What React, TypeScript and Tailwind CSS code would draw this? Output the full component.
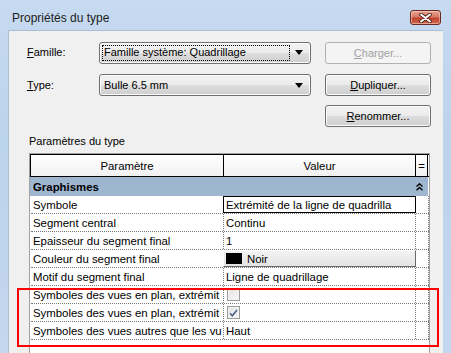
import React from "react";

const btn =
  "h-[22px] rounded-[3px] border border-[#707070] bg-[linear-gradient(#f2f2f2_0%,#ebebeb_50%,#dddddd_51%,#cfcfcf_100%)] shadow-[inset_0_0_0_1px_#fbfbfb] flex items-center justify-center text-[11px] text-black";

const Arrow = () => (
  <svg width="8" height="5" viewBox="0 0 8 5" className="shrink-0">
    <path d="M0 0h8L4 5z" fill="#000" />
  </svg>
);

const Check = ({ checked }: { checked?: boolean }) => (
  <div className="ml-[3px] w-[13px] h-[13px] border border-[#9a9a9a] bg-[linear-gradient(135deg,#e4e4e4,#f7f7f7)] shadow-[inset_0_0_0_1px_#f4f4f4] flex items-center justify-center">
    {checked && (
      <svg width="9" height="8" viewBox="0 0 9 8">
        <path d="M1 4.2l2.3 2.5L8 1" fill="none" stroke="#4a5f8c" strokeWidth="1.6" />
      </svg>
    )}
  </div>
);

type Row = { name: string; value?: React.ReactNode; kind?: "edit" | "color" | "check" | "checked" };

// texts as they show in the grid columns
const rows: Row[] = [
  { name: "Symbole", value: "Extrémité de la ligne de quadrilla", kind: "edit" },
  { name: "Segment central", value: "Continu" },
  { name: "Epaisseur du segment final", value: "1" },
  { name: "Couleur du segment final", value: "Noir", kind: "color" },
  { name: "Motif du segment final", value: "Ligne de quadrillage" },
  { name: "Symboles des vues en plan, extrémit", kind: "check" },
  { name: "Symboles des vues en plan, extrémit", kind: "checked" },
  { name: "Symboles des vues autres que les vu", value: "Haut" },
];

function ValueCell({ row }: { row: Row }) {
  if (row.kind === "edit") {
    return (
      <div className="w-[193px] -ml-px h-[18px] border border-black bg-white pl-[2px] flex items-center overflow-hidden whitespace-nowrap">
        {row.value}
      </div>
    );
  }
  if (row.kind === "color") {
    return (
      <div className="w-[193px] -ml-px h-[18px] border border-t-white border-l-white border-r-[#696969] border-b-[#696969] bg-[linear-gradient(#f3f3f3,#e3e3e3)] flex items-center pl-[2px] gap-[5px]">
        <div className="w-[16px] h-[11px] bg-black" />
        <span>{row.value}</span>
      </div>
    );
  }
  if (row.kind === "check" || row.kind === "checked") {
    return (
      <div className="h-full flex items-center border-r border-dotted border-[#7a7a7a]">
        <Check checked={row.kind === "checked"} />
      </div>
    );
  }
  return (
    <div className="h-full pl-[2px] flex items-center overflow-hidden whitespace-nowrap border-r border-dotted border-[#7a7a7a]">
      {row.value}
    </div>
  );
}

export default function App() {
  return (
    <div className="relative w-[451px] h-[353px] overflow-hidden flex flex-col bg-[linear-gradient(#c6daf0,#bcd3ec_40%,#c3d7ee)] font-['Liberation_Sans',Arial,sans-serif] text-black">
      {/* title bar */}
      <div className="h-[30px] shrink-0 flex items-start pl-[12px] pr-[10px]">
        <span className="mt-[11px] text-[12px] leading-[14px] text-[#1e1e1e]">Propriétés du type</span>
        <div className="ml-auto mt-[10px] w-[31px] h-[15px] rounded-[3px] border border-[#6b2a22] bg-[linear-gradient(#e8a493_0%,#d67a66_45%,#c0412c_55%,#cf6b4e_100%)] shadow-[inset_0_0_0_1px_rgba(255,220,210,0.5)] flex items-center justify-center">
          <svg width="13" height="10" viewBox="0 0 13 10">
            <path d="M2 1.5l9 7M11 1.5l-9 7" stroke="#4a1b14" strokeWidth="3.6" strokeLinecap="round" />
            <path d="M2 1.5l9 7M11 1.5l-9 7" stroke="#fff" strokeWidth="2" strokeLinecap="round" />
          </svg>
        </div>
      </div>

      {/* client area */}
      <div className="flex-1 ml-[8px] mr-[8px] bg-[#f0f0f0] border-t border-l border-[#a9bdd3] flex flex-col min-h-0">
        <div className="mt-[10px] ml-[18px] grid grid-cols-[72px_226px_106px] gap-y-[10px] text-[11px] items-center">
          <span>
            <u>F</u>amille:
          </span>
          <div className={`${btn} w-[212px] justify-start px-[2px]`}>
            <div className="flex-1 h-[16px] border border-dotted border-black flex items-center pl-[1px]">
              Famille système: Quadrillage
            </div>
            <div className="w-[18px] flex justify-center">
              <Arrow />
            </div>
          </div>
          <div className="h-[22px] mt-px rounded-[3px] border border-[#adb2b5] bg-[#f4f4f4] flex items-center justify-center text-[#a0a0a0]">
            <span>
              <u>C</u>harger...
            </span>
          </div>

          <span>
            <u>T</u>ype:
          </span>
          <div className={`${btn} w-[212px] justify-start px-[2px]`}>
            <div className="flex-1 pl-[2px]">Bulle 6.5 mm</div>
            <div className="w-[18px] flex justify-center">
              <Arrow />
            </div>
          </div>
          <div className={btn}>
            <span>
              <u>D</u>upliquer...
            </span>
          </div>

          <span />
          <span />
          <div className={`${btn} -mt-px`}>
            <span>
              <u>R</u>enommer...
            </span>
          </div>
        </div>

        <div className="mt-[7px] ml-[20px] text-[11px] leading-[14px]">Paramètres du type</div>

        {/* property grid */}
        <div className="mt-[5px] ml-[20px] w-[401px] flex-1 border-t border-l border-r border-[#a0a0a0] bg-white text-[11.4px] leading-[14px] flex flex-col">
          <div className="h-[23px] flex border-t border-b border-l border-black bg-[linear-gradient(#ffffff,#f1f1f1)]">
            <div className="w-[193px] border-r border-black flex items-center justify-center">Paramètre</div>
            <div className="w-[192px] border-r border-black flex items-center justify-center">Valeur</div>
            <div className="w-[12px] border-r border-black flex items-center justify-center">=</div>
          </div>
          <div className="h-[19px] mr-px bg-[#9fb6d1] flex items-center pl-[3px] pr-[5px]">
            <span className="font-bold">Graphismes</span>
            <svg width="7" height="8" viewBox="0 0 7 8" className="ml-auto">
              <path d="M0.5 3.5L3.5 0.8L6.5 3.5M0.5 7.2L3.5 4.5L6.5 7.2" fill="none" stroke="#000" strokeWidth="1.4" />
            </svg>
          </div>
          {rows.map((r, i) => (
            <div key={i} className="h-[18px] flex ml-px border-b border-dotted border-[#7a7a7a]">
              <div className="w-[193px] pl-[2px] flex items-center overflow-hidden whitespace-nowrap border-r border-dotted border-[#7a7a7a]">
                {r.name}
              </div>
              <div className="w-[192px] flex flex-col justify-center">
                <ValueCell row={r} />
              </div>
              <div className="w-[13px] border-r border-dotted border-[#7a7a7a]" />
            </div>
          ))}
        </div>
      </div>

      {/* highlight box */}
      <div className="absolute left-[17px] top-[288px] w-[422px] h-[59px] border-2 border-[#ff0000] pointer-events-none" />
    </div>
  );
}
